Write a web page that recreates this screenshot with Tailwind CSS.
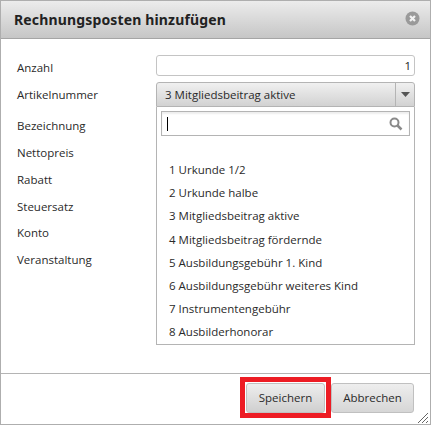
<!doctype html>
<html><head><meta charset="utf-8"><script src="https://cdn.jsdelivr.net/npm/@tailwindcss/browser@4"></script></head>
<body class="bg-white">
<div class="w-[431px] h-[425px] flex flex-col border border-[#aeaeae] font-['Open_Sans','Noto_Sans',sans-serif] text-[11.5px] text-[#2a2a2a] overflow-hidden relative">
  <div class="h-[38px] shrink-0 bg-gradient-to-b from-[#ececec] to-[#c6c6c6] border-b border-[#a5a5a5] flex items-center justify-between pl-[13px] pr-[6px]">
    <span class="font-['Noto_Sans',sans-serif] font-bold text-[14px] tracking-[0.15px] text-[#222]">Rechnungsposten hinzufügen</span>
    <svg width="15" height="15" viewBox="0 0 15 15" class="mb-[3px] mr-[4px]"><circle cx="7.500" cy="7.500" r="7" fill="#9a9a9a"/><path d="M5 5l5 5M10 5l-5 5" stroke="#f2f2f2" stroke-width="2.200"/></svg>
  </div>
  <div class="flex-1 relative flex pl-[16px] pt-[16px]">
    <div class="w-[139px] shrink-0 flex flex-col -mt-[1px]">
      <div class="h-[27px] flex items-center">Anzahl</div>
      <div class="h-[27px] flex items-center">Artikelnummer</div>
      <div class="h-[27px] mt-[4px] flex items-center">Bezeichnung</div>
      <div class="h-[27px] flex items-center">Nettopreis</div>
      <div class="h-[27px] flex items-center">Rabatt</div>
      <div class="h-[27px] flex items-center">Steuersatz</div>
      <div class="h-[26px] flex items-center">Konto</div>
      <div class="h-[27px] flex items-center">Veranstaltung</div>
    </div>
    <div class="w-[259px] flex flex-col">
      <div class="h-[21px] border border-[#c4c4c4] rounded-[3px] flex items-center justify-end pr-[3px] bg-white text-[#222]">1</div>
      <div class="h-[25px] mt-[6px] border border-[#b4b4b4] rounded-t-[3px] bg-gradient-to-b from-[#f0f0f0] to-[#d2d2d2] flex items-center">
        <span class="flex-1 pl-[8px]">3 Mitgliedsbeitrag aktive</span>
        <span class="w-[19px] h-full border-l border-[#b4b4b4] flex items-center justify-center"><svg width="9" height="5" viewBox="0 0 9 5"><path d="M0 0h9L4.500 5z" fill="#555"/></svg></span>
      </div>
      <div class="h-[238px] border border-t-0 border-[#b4b4b4] bg-white px-[4px] pt-[4px] flex flex-col">
        <div class="h-[25px] shrink-0 border border-[#b4b4b4] shadow-[inset_0_2px_2px_#eee] flex items-center justify-between pl-[5px] pr-[6px]">
          <span class="w-px h-[14px] bg-black"></span>
          <svg width="14" height="14" viewBox="0 0 14 14"><circle cx="5.500" cy="5.500" r="4" fill="none" stroke="#8a8a8a" stroke-width="2"/><path d="M8.500 8.500l4 4" stroke="#8a8a8a" stroke-width="2.500"/></svg>
        </div>
        <ul class="mt-[22px] pl-[8px] flex flex-col">
          <li class="h-[23px] flex items-center">1 Urkunde 1/2</li>
          <li class="h-[23px] flex items-center">2 Urkunde halbe</li>
          <li class="h-[24px] flex items-center">3 Mitgliedsbeitrag aktive</li>
          <li class="h-[23px] flex items-center">4 Mitgliedsbeitrag fördernde</li>
          <li class="h-[23px] flex items-center">5 Ausbildungsgebühr 1. Kind</li>
          <li class="h-[23px] flex items-center">6 Ausbildungsgebühr weiteres Kind</li>
          <li class="h-[23px] flex items-center">7 Instrumentengebühr</li>
          <li class="h-[23px] flex items-center">8 Ausbilderhonorar</li>
        </ul>
      </div>
    </div>
  </div>
  <div class="h-[51px] shrink-0 border-t border-[#b4b4b4] flex justify-end items-start pt-[9px] pr-[16px] relative">
    <button class="relative w-[79px] h-[30px] border border-[#c0c0c0] rounded-[3px] bg-gradient-to-b from-[#eeeeee] to-[#cfcfcf] text-[#2a2a2a]">Speichern<span class="absolute left-[-7px] top-[-7px] w-[91px] h-[41px] border-[5px] border-[#ed1c24]"></span></button>
    <button class="ml-[6px] w-[83px] h-[30px] border border-[#c0c0c0] rounded-[3px] bg-gradient-to-b from-[#eeeeee] to-[#d6d6d6] text-[#2a2a2a]">Abbrechen</button>
    <svg width="12" height="12" viewBox="0 0 12 12" class="absolute right-[1px] bottom-0"><path d="M1 11L11 1M5 11l6-6M9 11l2-2" stroke="#666" stroke-width="1"/></svg>
  </div>
</div>
</body></html>
